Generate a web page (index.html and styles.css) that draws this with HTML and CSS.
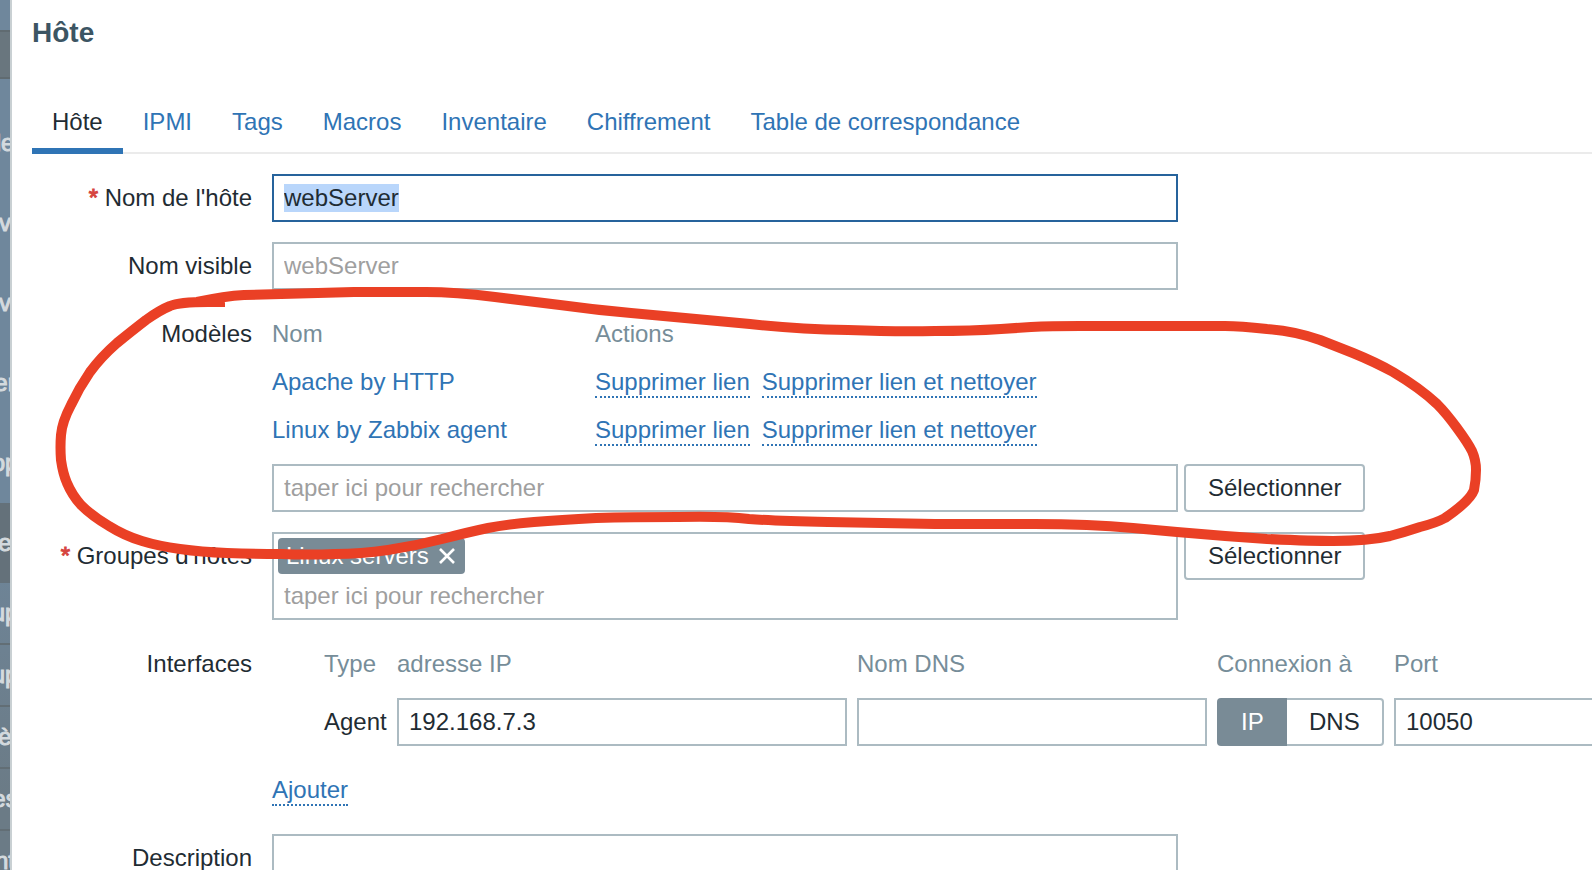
FILE: index.html
```html
<!DOCTYPE html>
<html lang="fr">
<head>
<meta charset="utf-8">
<title>Hôte</title>
<link rel="stylesheet" href="styles.css">
</head>
<body>
<div class="app">
  <aside class="sidebar">
    <div class="sidebar-logo"></div>
    <div class="sidebar-search"></div>
    <ul class="menu">
      <li>le</li>
      <li>v</li>
      <li>v</li>
      <li>er</li>
      <li>op</li>
      <li class="is-selected">e</li>
    </ul>
    <ul class="submenu">
      <li>up</li>
      <li>up</li>
      <li>è</li>
      <li>es</li>
      <li>nt</li>
    </ul>
  </aside>

  <main class="dialog">
    <h1 class="dialog-title">Hôte</h1>
    <nav class="tabs">
      <a class="tab is-active" href="#host">Hôte</a>
      <a class="tab" href="#ipmi">IPMI</a>
      <a class="tab" href="#tags">Tags</a>
      <a class="tab" href="#macros">Macros</a>
      <a class="tab" href="#inventory">Inventaire</a>
      <a class="tab" href="#encryption">Chiffrement</a>
      <a class="tab" href="#valuemap">Table de correspondance</a>
    </nav>

    <form class="form">
      <label class="label required" for="host">Nom de l'hôte</label>
      <div class="field"><input class="text wide" id="host" type="text" value="webServer" autofocus></div>

      <label class="label" for="visible">Nom visible</label>
      <div class="field"><input class="text wide" id="visible" type="text" placeholder="webServer"></div>

      <label class="label" for="templates">Modèles</label>
      <div class="field">
        <table class="templates">
          <thead>
            <tr><th class="col-name">Nom</th><th>Actions</th></tr>
          </thead>
          <tbody>
            <tr>
              <td><a class="link" href="#apache">Apache by HTTP</a></td>
              <td><div class="actions"><button type="button" class="link-action">Supprimer lien</button><button type="button" class="link-action">Supprimer lien et nettoyer</button></div></td>
            </tr>
            <tr>
              <td><a class="link" href="#linux">Linux by Zabbix agent</a></td>
              <td><div class="actions"><button type="button" class="link-action">Supprimer lien</button><button type="button" class="link-action">Supprimer lien et nettoyer</button></div></td>
            </tr>
          </tbody>
        </table>
        <div class="select-row">
          <input class="text wide" id="templates" type="text" placeholder="taper ici pour rechercher">
          <button type="button" class="button">Sélectionner</button>
        </div>
      </div>

      <label class="label required" for="groups">Groupes d'hôtes</label>
      <div class="field select-row">
        <div class="multiselect wide">
          <span class="chip">Linux servers
            <button type="button" class="chip-remove" aria-label="Supprimer">
              <svg width="16" height="16" viewBox="0 0 16 16"><path d="M1 1L15 15M15 1L1 15" stroke="currentColor" stroke-width="2.6" fill="none"/></svg>
            </button>
          </span>
          <input class="multiselect-input" id="groups" type="text" placeholder="taper ici pour rechercher">
        </div>
        <button type="button" class="button">Sélectionner</button>
      </div>

      <span class="label">Interfaces</span>
      <div class="field">
        <table class="interfaces">
          <thead>
            <tr>
              <th class="col-type">Type</th>
              <th class="col-ip">adresse IP</th>
              <th class="col-dns">Nom DNS</th>
              <th class="col-connect">Connexion à</th>
              <th class="col-port">Port</th>
            </tr>
          </thead>
          <tbody>
            <tr>
              <td>Agent</td>
              <td><input class="text" type="text" aria-label="adresse IP" value="192.168.7.3"></td>
              <td><input class="text" type="text" aria-label="Nom DNS"></td>
              <td>
                <div class="toggle">
                  <input type="radio" name="useip" id="useip-ip" checked><label for="useip-ip">IP</label>
                  <input type="radio" name="useip" id="useip-dns"><label for="useip-dns">DNS</label>
                </div>
              </td>
              <td><input class="text" type="text" aria-label="Port" value="10050"></td>
            </tr>
          </tbody>
        </table>
        <div class="add-row"><button type="button" class="link-action">Ajouter</button></div>
      </div>

      <label class="label" for="description">Description</label>
      <div class="field"><textarea class="text wide area" id="description"></textarea></div>
    </form>
  </main>

  <svg class="annotation" width="1592" height="870" viewBox="0 0 1592 870" aria-hidden="true">
    <path d="M225 302L208 302Q179 302 170 306Q160 310 146 320Q133 330 117 343Q101 357 90 372Q79 388 71 405Q62 422 61 435Q60 447 61 460Q63 474 67 483Q72 495 81 505Q92 516 109 526Q125 536 142 541Q158 546 180 549Q201 552 227 553Q254 554 281 554Q308 555 335 554Q361 554 388 550Q415 546 442 539Q469 532 488 528Q508 524 534 522Q560 520 596 518Q631 517 678 517Q724 516 749 519Q774 521 828 522Q881 523 935 524L1034 524Q1090 524 1133 528L1177 532Q1222 536 1267 539Q1313 541 1333 541Q1368 541 1390 536Q1405 532 1420 527Q1436 523 1445 518Q1470 501 1474 490Q1476 480 1476 470Q1476 460 1472 451Q1468 443 1457 428Q1446 413 1437 404Q1420 388 1393 372Q1375 362 1353 353L1320 340Q1295 331 1267 329Q1240 326 1225 326L1080 326Q1050 326 1031 327L1001 329Q971 331 935 331Q899 332 848 330Q796 329 750 324L631 313Q596 310 560 305L495 297Q455 292 426 292L354 292L244 295Q225 296 197 302"/>
  </svg>
</div>
<script src="script.js"></script>
</body>
</html>
```
FILE: styles.css
```css
* {
  box-sizing: border-box;
}

body {
  margin: 0;
  background: #fff;
  color: #1f2c33;
  font-family: "Liberation Sans", Arial, sans-serif;
  font-size: 24px;
  line-height: 28px;
}

button,
input,
textarea {
  font: inherit;
  color: inherit;
}

.app {
  position: relative;
  display: flex;
  height: 100vh;
  overflow: hidden;
}

/* Sidebar strip left uncovered by the dialog */
.sidebar {
  flex: none;
  width: 10px;
  overflow: hidden;
  background: linear-gradient(#6f879c 500px, #6b7b86 800px);
  color: #d4dade;
  -webkit-text-stroke: 1px;
}

.sidebar-logo {
  height: 30px;
}

.sidebar-search {
  height: 49px;
  border: 2px solid #606b71;
  border-width: 2px 0;
  background: #69767e;
}

.menu,
.submenu {
  margin: 0;
  padding: 0;
  list-style: none;
}

.menu {
  padding-top: 24px;
}

.menu li,
.submenu li {
  display: flex;
  align-items: center;
  justify-content: center;
  height: 80px;
}

.menu .is-selected {
  background: #64717a;
}

.submenu li {
  height: 62px;
  border-bottom: 2px solid #626e75;
}

.dialog {
  flex: 1;
  min-width: 0;
  overflow: hidden;
  padding: 17px 0 0 20px;
  border-left: 2px solid #c9d0d3;
  background: #fff;
}

.dialog-title {
  margin: 0;
  color: #3c5563;
  font-size: 28px;
  line-height: 32px;
}

.tabs {
  display: flex;
  margin-top: 39px;
  border-bottom: 2px solid #ebebeb;
}

.tab {
  margin-bottom: -2px;
  padding: 20px 20px 18px;
  color: #2f74b5;
  text-decoration: none;
}

.tab.is-active {
  padding-bottom: 12px;
  border-bottom: 6px solid #2f74b5;
  color: #1f2c33;
}

.form {
  display: grid;
  grid-template-columns: 220px minmax(0, 1fr);
  gap: 20px;
  padding-top: 20px;
}

.label {
  padding: 10px 0;
  text-align: right;
}

.required::before {
  content: "* ";
  color: #d64540;
  -webkit-text-stroke: 1px;
}

.text {
  display: block;
  width: 100%;
  height: 48px;
  padding: 8px 10px;
  border: 2px solid #acbbc2;
  border-radius: 0;
  background: #fff;
}

.wide {
  width: 906px;
}

.area {
  height: 120px;
  resize: none;
}

.text:focus {
  border-color: #26639c;
  outline: none;
}

::selection {
  background: #b9d6fb;
  color: #1f2c33;
}

::placeholder {
  color: #9f9f9f;
  opacity: 1;
}

table {
  border-collapse: collapse;
  table-layout: fixed;
}

th,
td {
  height: 48px;
  padding: 0;
  text-align: left;
  font-weight: 400;
}

th {
  color: #768d99;
}

.templates {
  width: 906px;
  margin-bottom: 10px;
}

.col-name {
  width: 323px;
}

.actions {
  display: flex;
  gap: 12px;
}

.link {
  color: #2f74b5;
  text-decoration: none;
}

.link-action {
  margin: 2px 0 0;
  padding: 0;
  border: 0;
  border-bottom: 2px dotted #2f74b5;
  background: none;
  color: #2f74b5;
  line-height: 28px;
}

.select-row {
  display: flex;
  align-items: flex-start;
  gap: 6px;
}

.button {
  height: 48px;
  padding: 0 22px;
  border: 2px solid #acbbc2;
  border-radius: 4px;
  background: #fff;
}

.multiselect {
  display: flex;
  flex-direction: column;
  align-items: flex-start;
  height: 88px;
  padding: 4px;
  border: 2px solid #acbbc2;
}

.chip {
  display: flex;
  align-items: center;
  gap: 10px;
  height: 36px;
  padding: 0 10px 0 8px;
  border-radius: 4px;
  background: #798b96;
  color: #fff;
}

.chip-remove {
  display: flex;
  padding: 0;
  border: 0;
  background: none;
}

.multiselect-input {
  width: 100%;
  height: 40px;
  padding: 4px 6px 0;
  border: 0;
  background: none;
  outline: none;
}

.interfaces {
  width: 1330px;
  margin-left: 52px;
}

.interfaces td {
  height: 68px;
  padding-right: 10px;
}

.col-type {
  width: 73px;
}

.col-ip {
  width: 460px;
}

.col-dns {
  width: 360px;
}

.col-connect {
  width: 177px;
}

.toggle {
  display: flex;
}

.toggle input {
  position: absolute;
  opacity: 0;
}

.toggle label {
  height: 48px;
  padding: 8px 22px;
  border: 2px solid #acbbc2;
}

.toggle label:first-of-type {
  width: 70px;
  border-right: 0;
  border-radius: 4px 0 0 4px;
}

.toggle label:last-of-type {
  flex: 1;
  border-left: 0;
  border-radius: 0 4px 4px 0;
}

.toggle input:checked + label {
  border-color: #798b96;
  background: #798b96;
  color: #fff;
}

.add-row {
  display: flex;
  align-items: center;
  height: 48px;
  margin-top: 10px;
}

.annotation {
  position: absolute;
  top: 0;
  left: 0;
  pointer-events: none;
}

.annotation path {
  fill: none;
  stroke: #ea4025;
  stroke-width: 10;
  stroke-linejoin: round;
}
```
FILE: script.js
```js
const host = document.getElementById("host");
host.focus();
host.select();
```
